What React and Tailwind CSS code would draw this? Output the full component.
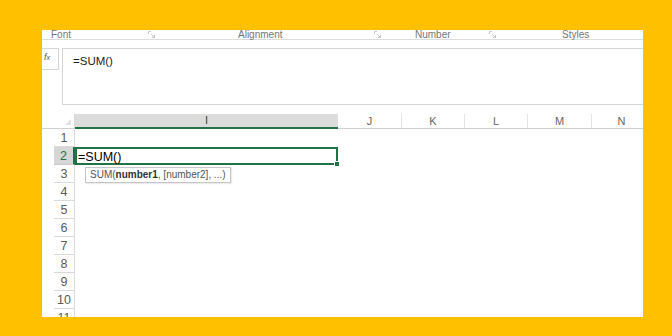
import React from "react";

const Launcher = () => (
  <svg width="8" height="8" viewBox="0 0 8 8" className="block">
    <path d="M0.5 0.5 H3 M0.5 0.5 V3" stroke="#c8c8c8" strokeWidth="1" fill="none" />
    <path d="M3 3 L6.5 6.5 M4 6.5 H6.5 V4" stroke="#c8c8c8" strokeWidth="1" fill="none" />
  </svg>
);

const cols = [
  { l: "I", w: 263 },
  { l: "J", w: 64 },
  { l: "K", w: 63 },
  { l: "L", w: 63 },
  { l: "M", w: 64 },
  { l: "N", w: 60 },
];

const rows = [1, 2, 3, 4, 5, 6, 7, 8, 9, 10, 11];

export default function App() {
  return (
    <div
      className="w-[672px] h-[336px] bg-[#FFC000] pt-[30px] pl-[42px] overflow-hidden"
      style={{ fontFamily: '"Liberation Sans", Arial, sans-serif' }}
    >
      <div className="w-[601px] h-[287px] bg-white overflow-hidden flex flex-col relative">
        {/* ribbon group labels */}
        <div className="h-[10px] border-b border-[#dcdcdc] flex items-start text-[10px] leading-[10px] text-[#767676] shrink-0">
          <div className="w-[106px] shrink-0 pl-[9px]">Font</div>
          <div className="w-[90px] shrink-0 pt-[1px]"><Launcher /></div>
          <div className="w-[136px] shrink-0">Alignment</div>
          <div className="w-[41px] shrink-0 pt-[1px]"><Launcher /></div>
          <div className="w-[74px] shrink-0">Number</div>
          <div className="w-[73px] shrink-0 pt-[1px]"><Launcher /></div>
          <div className="shrink-0">Styles</div>
        </div>

        {/* formula bar */}
        <div className="flex items-start mt-[8px] shrink-0">
          <div className="w-[17px] h-[22px] border-y border-r border-[#d4d4d4] text-[9px] italic text-[#555] pl-[2px] pt-[4px] leading-none">
            f<span className="text-[7px]">x</span>
          </div>
          <div className="ml-[3px] flex-1 h-[57px] border-y border-l border-[#d4d4d4] pl-[10px] pt-[7px] text-[11.5px] leading-none text-[#222]">
            =SUM()
          </div>
        </div>

        {/* grid */}
        <div className="mt-[9px] flex flex-col shrink-0 relative">
          {/* header */}
          <div className="flex h-[15px] border-b border-[#d0d0d0]">
            <div className="w-[12px] shrink-0 bg-white" />
            <div className="w-[21px] shrink-0 border-r border-[#d8d8d8] relative">
              <svg width="8" height="8" className="absolute right-[2px] bottom-[2px]">
                <path d="M7 1 L7 7 L1 7 Z" fill="#e2e2e2" />
              </svg>
            </div>
            {cols.map((c, i) => (
              <div
                key={c.l}
                style={{ width: c.w }}
                className={
                  i === 0
                    ? "shrink-0 bg-[#dcdcdc] border-b-2 border-[#217346] -mb-[1px] flex items-center justify-center text-[11px] text-[#2e4a3a] leading-none"
                    : "shrink-0 border-r border-[#e4e4e4] flex items-center justify-center text-[11px] text-[#666] leading-none"
                }
              >
                {c.l}
              </div>
            ))}
          </div>
          {/* rows */}
          {rows.map((r) => (
            <div key={r} className="flex h-[18px] shrink-0">
              <div className="w-[12px] shrink-0" />
              <div
                className={
                  r === 2
                    ? "w-[21px] shrink-0 bg-[#d6d6d6] border-r-2 border-[#217346] border-b border-b-[#c8c8c8] flex items-center justify-center pt-[2px] text-[12.5px] text-[#217346] leading-none"
                    : "w-[21px] shrink-0 border-r border-b border-[#dadada] flex items-center justify-center pt-[2px] text-[12.5px] text-[#5a5a5a] leading-none"
                }
              >
                {r}
              </div>
              <div className="flex-1 relative">
                {r === 2 && (
                  <div className="absolute left-0 top-0 w-[263px] h-[18px] border-2 border-[#217346] pl-[1px] pt-[1px] text-[12.5px] leading-[14px] text-black">
                    =SUM()
                    <div className="absolute -right-[4px] -bottom-[4px] w-[6px] h-[6px] bg-[#217346] border border-white" />
                  </div>
                )}
              </div>
            </div>
          ))}

          {/* tooltip */}
          <div className="absolute left-[43px] top-[53px] h-[16px] px-[4px] border border-[#c6c6c6] bg-white text-[10px] leading-[14px] text-[#555] shadow-[1px_1px_1px_rgba(0,0,0,0.08)] whitespace-nowrap">
            SUM(<span className="font-bold text-[#333]">number1</span>, [number2], ...)
          </div>
        </div>
      </div>
    </div>
  );
}
